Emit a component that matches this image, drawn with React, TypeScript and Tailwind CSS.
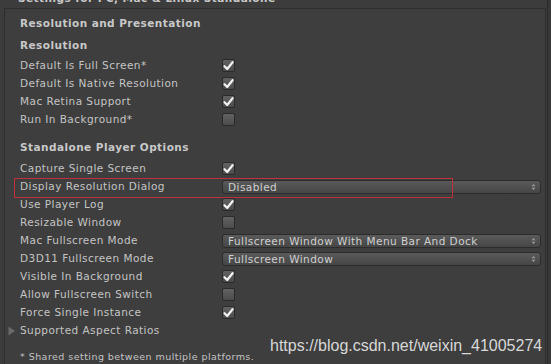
import React from 'react';

type Row =
  | { kind: 'check'; label: string; on: boolean }
  | { kind: 'select'; label: string; value: string; highlight?: boolean };

const resolution: Row[] = [
  { kind: 'check', label: 'Default Is Full Screen*', on: true },
  { kind: 'check', label: 'Default Is Native Resolution', on: true },
  { kind: 'check', label: 'Mac Retina Support', on: true },
  { kind: 'check', label: 'Run In Background*', on: false },
];

const standalone: Row[] = [
  { kind: 'check', label: 'Capture Single Screen', on: true },
  { kind: 'select', label: 'Display Resolution Dialog', value: 'Disabled', highlight: true },
  { kind: 'check', label: 'Use Player Log', on: true },
  { kind: 'check', label: 'Resizable Window', on: false },
  { kind: 'select', label: 'Mac Fullscreen Mode', value: 'Fullscreen Window With Menu Bar And Dock' },
  { kind: 'select', label: 'D3D11 Fullscreen Mode', value: 'Fullscreen Window' },
  { kind: 'check', label: 'Visible In Background', on: true },
  { kind: 'check', label: 'Allow Fullscreen Switch', on: false },
  { kind: 'check', label: 'Force Single Instance', on: true },
];

function Checkbox({ on }: { on: boolean }) {
  return (
    <div className="w-[13px] h-[13px] rounded-[2px] border border-[#2a2a2a] bg-gradient-to-b from-[#626262] to-[#4c4c4c] flex items-center justify-center">
      {on && (
        <svg width="11" height="10" viewBox="0 0 11 10">
          <path d="M1.5 5.2 L4.2 8 L9.6 1.2" fill="none" stroke="#f2f2f2" strokeWidth="2.2" strokeLinecap="round" strokeLinejoin="round" />
        </svg>
      )}
    </div>
  );
}

function Select({ value }: { value: string }) {
  return (
    <div className="flex-1 h-[14px] rounded-[3px] border border-[#2c2c2c] bg-gradient-to-b from-[#5a5a5a] to-[#464646] flex items-center pl-[5px] pr-[4px] text-[#d0d0d0]">
      <span className="flex-1 leading-none">{value}</span>
      <svg width="5" height="8" viewBox="0 0 5 8">
        <path d="M0.5 3.2 L2.5 1 L4.5 3.2 Z M0.5 4.8 L2.5 7 L4.5 4.8 Z" fill="#9a9a9a" />
      </svg>
    </div>
  );
}

function Field({ row }: { row: Row }) {
  return (
    <div className="relative h-[18px] flex items-center">
      {row.kind === 'select' && row.highlight && (
        <div className="absolute left-[-6px] top-[0px] w-[439px] h-[20px] border border-[#c0303a]" />
      )}
      <div className="w-[202px] shrink-0">{row.label}</div>
      {row.kind === 'check' ? <Checkbox on={row.on} /> : <Select value={row.value} />}
    </div>
  );
}

export default function App() {
  return (
    <div
      className="w-[551px] h-[364px] overflow-hidden bg-[#3c3c3c] text-[#c4c4c4] text-[10.5px] tracking-[0.45px] relative flex"
      style={{ fontFamily: '"DejaVu Sans", Verdana, sans-serif' }}
    >
      <div className="flex-1 flex flex-col">
        {/* Cut-off window title */}
        <div className="h-[9px] relative overflow-hidden">
          <div className="absolute left-[18px] top-[-9px] font-bold text-[#c8c8c8]">Settings for PC, Mac &amp; Linux Standalone</div>
        </div>

        {/* Frame */}
        <div className="flex-1 ml-[4px] mr-[1px] border-l border-t border-r border-[#2e2e2e] bg-[#3e3e3e] pl-[14px] pr-[4px] pt-[6px]">
          <div className="h-[18px] flex items-center font-bold text-[#c8c8c8] pl-[1px]">Resolution and Presentation</div>

          <div className="pl-[1px] pt-[4px]">
            <div className="h-[18px] flex items-center font-bold text-[#c8c8c8]">Resolution</div>
            <div className="pt-[2px]">
              {resolution.map((r) => (
                <Field key={r.label} row={r} />
              ))}
            </div>

            <div className="h-[28px] flex items-end font-bold text-[#c8c8c8] pb-[1px]">Standalone Player Options</div>
            <div className="pt-[3px]">
              {standalone.map((r) => (
                <Field key={r.label} row={r} />
              ))}
            </div>
          </div>

          <div className="h-[18px] flex items-center ml-[-11px]">
            <svg width="8" height="10" viewBox="0 0 8 10" className="mr-[4px]">
              <path d="M0.5 0.5 L7 5 L0.5 9.5 Z" fill="#6a6a6a" />
            </svg>
            Supported Aspect Ratios
          </div>

          <div className="mt-[10px] text-[9.5px] pl-[1px]">* Shared setting between multiple platforms.</div>
        </div>
      </div>

      {/* Right scroll edge */}
      <div className="w-[4px] border-l border-[#2a2a2a] bg-[#383838]" />

      {/* Watermark */}
      <div
        className="absolute left-[270px] top-[334px] text-[16px] text-[#d8d8d8] tracking-normal"
        style={{ fontFamily: '"Liberation Sans", Arial, sans-serif' }}
      >
        https://blog.csdn.net/weixin_41005274
      </div>
    </div>
  );
}
